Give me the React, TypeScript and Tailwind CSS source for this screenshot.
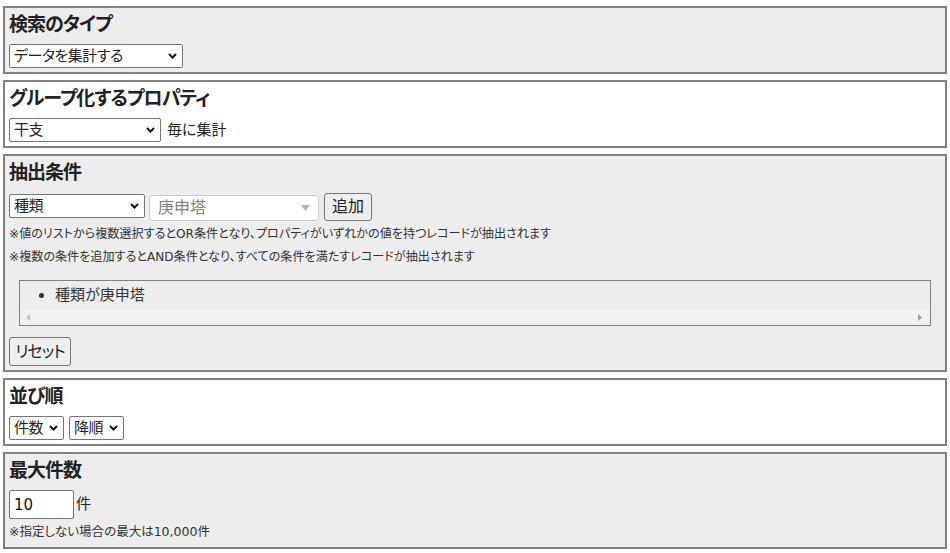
import type { ReactNode } from "react";

const font = "[font-family:'DejaVu_Sans','Noto_Sans_CJK_JP',sans-serif] [font-feature-settings:'palt']";

function Section({ title, gray, children }: { title: string; gray?: boolean; children: ReactNode }) {
  return (
    <section
      className={`mx-[3px] border-2 border-[#808080] px-[4px] pt-[4px] pb-[4px] ${gray ? "bg-[#ededed]" : "bg-white"}`}
    >
      <h3 className="text-[19px] font-bold leading-[24px] tracking-[-1px] text-[#222]">{title}</h3>
      {children}
    </section>
  );
}

function Chevron() {
  return (
    <svg width="9" height="6" viewBox="0 0 9 6" className="pointer-events-none absolute right-[6px] top-[9px]">
      <polyline points="1,1 4.5,4.5 8,1" fill="none" stroke="#111" strokeWidth="2" />
    </svg>
  );
}

function Select({ value, width }: { value: string; width: string }) {
  return (
    <div className={`relative inline-flex h-[24px] ${width}`}>
      <select
        defaultValue={value}
        className="h-full w-full appearance-none rounded-[2px] border border-[#767676] bg-white pl-[4px] pr-[20px] text-[15px] leading-[22px] tracking-[-0.5px] text-[#222] outline-none"
      >
        <option>{value}</option>
      </select>
      <Chevron />
    </div>
  );
}

export default function App() {
  return (
    <div className={`${font} flex flex-col gap-[6px] bg-white pt-[6px] text-[#333]`}>
      <Section title="検索のタイプ" gray>
        <div className="mt-[8px] flex">
          <Select value="データを集計する" width="w-[174px]" />
        </div>
      </Section>

      <Section title="グループ化するプロパティ">
        <div className="mt-[8px] flex items-center">
          <Select value="干支" width="w-[152px]" />
          <span className="ml-[6px] text-[15px] text-[#222]">毎に集計</span>
        </div>
      </Section>

      <Section title="抽出条件" gray>
        <div className="mt-[8px] flex h-[30px] items-start">
          <div className="mt-[2px]">
            <Select value="種類" width="w-[136px]" />
          </div>
          <div className="ml-[4px] mt-[3px] flex h-[26px] w-[170px] items-center justify-between rounded-[4px] border border-[#cccccc] bg-white pl-[8px] pr-[8px]">
            <span className="text-[16px] text-[#808080]">庚申塔</span>
            <svg width="9" height="6" viewBox="0 0 9 6">
              <polygon points="0,0 9,0 4.5,6" fill="#b3b3b3" />
            </svg>
          </div>
          <button className="ml-[5px] mt-[1px] h-[28px] w-[48px] rounded-[3px] border border-[#767676] bg-[#efefef] text-[16px] text-[#222]">
            追加
          </button>
        </div>
        <p className="mt-[1px] text-[12.1px] leading-[23px] text-[#333]">
          ※値のリストから複数選択するとOR条件となり、プロパティがいずれかの値を持つレコードが抽出されます
        </p>
        <p className="text-[12.1px] leading-[23px] text-[#333]">
          ※複数の条件を追加するとAND条件となり、すべての条件を満たすレコードが抽出されます
        </p>
        <div className="mx-[10px] mt-[11px] border border-[#808080]">
          <ul className="flex h-[28px] list-disc items-center pl-[35px]">
            <li className="text-[15px] text-[#333]">種類が庚申塔</li>
          </ul>
          <div className="flex h-[16px] items-center justify-between bg-[#f1f1f1] pl-[6px] pr-[8px]">
            <svg width="4" height="7" viewBox="0 0 4 7">
              <polygon points="4,0 4,7 0,3.5" fill="#c2c2c2" />
            </svg>
            <svg width="4" height="7" viewBox="0 0 4 7">
              <polygon points="0,0 0,7 4,3.5" fill="#a3a3a3" />
            </svg>
          </div>
        </div>
        <button className="mt-[11px] h-[29px] w-[62px] rounded-[3px] border border-[#767676] bg-[#efefef] text-[16px] tracking-[-1px] text-[#222]">
          リセット
        </button>
      </Section>

      <Section title="並び順">
        <div className="mt-[8px] flex gap-[5px]">
          <Select value="件数" width="w-[55px]" />
          <Select value="降順" width="w-[55px]" />
        </div>
      </Section>

      <Section title="最大件数" gray>
        <div className="mt-[8px] flex items-center">
          <input
            defaultValue="10"
            className="h-[29px] w-[65px] rounded-[2px] border border-[#767676] bg-white pl-[4px] text-[15px] text-[#111] outline-none"
          />
          <span className="ml-[2px] text-[15px] text-[#222]">件</span>
        </div>
        <p className="mt-[2px] text-[12.5px] leading-[22px] text-[#333]">※指定しない場合の最大は10,000件</p>
      </Section>
    </div>
  );
}
